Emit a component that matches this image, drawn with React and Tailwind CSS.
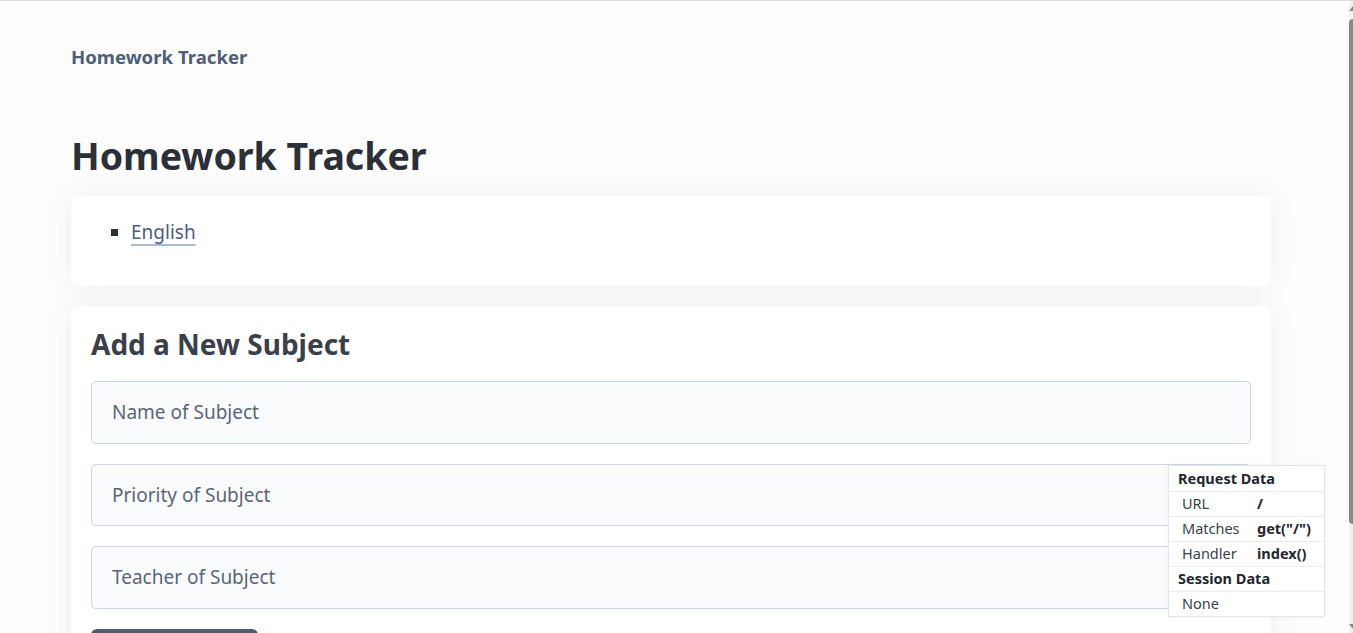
import React from 'react';

const fields = ['Name of Subject', 'Priority of Subject', 'Teacher of Subject'];

const DebugRow = ({ label, value }) => (
  <div className="flex h-[25px] items-center border-t border-[#ececef] pl-[13px]">
    <span className="w-[75px] font-normal text-[#3a3f4a]">{label}</span>
    <span className="font-bold text-[#23262d]">{value}</span>
  </div>
);

const DebugHeader = ({ children }) => (
  <div className="flex h-[25px] items-center border-t border-[#ececef] pl-[9px] font-bold text-[#23262d] first:border-t-0">
    {children}
  </div>
);

const App = () => {
  return (
    <div className="flex h-screen overflow-hidden border-t border-[#dedede] bg-[#fdfdfd] font-['Noto_Sans','Open_Sans',sans-serif]">
      <div className="relative flex-1 overflow-hidden">
        <div className="ml-[71px] w-[1200px]">
          <nav className="pt-[44px] text-[18.6px] font-bold leading-[24px] text-[#4d5d7c]">Homework Tracker</nav>

          <h1 className="mt-[62px] text-[37.5px] font-bold leading-[50px] text-[#2b2f37]">Homework Tracker</h1>

          <div className="mt-[15px] h-[90px] rounded-[7px] bg-white px-5 pt-[20px] shadow-[0_0_28px_rgba(40,50,90,0.07)]">
            <ul className="list-[square] pl-10 text-[19px] leading-[32px] text-[#4d5d7c] marker:text-[#2b2f37]">
              <li>
                <a href="#" className="underline decoration-[#a9bcd6] decoration-2 underline-offset-[5px]">English</a>
              </li>
            </ul>
          </div>

          <div className="mt-5 h-[400px] rounded-[7px] bg-white px-5 pt-[20px] shadow-[0_0_28px_rgba(40,50,90,0.07)]">
            <h2 className="text-[28px] font-bold leading-[36px] text-[#3a3f4a]">Add a New Subject</h2>
            <form className="mt-[19px] flex flex-col gap-[20px]">
              {fields.map((f) => (
                <input
                  key={f}
                  placeholder={f}
                  className="h-[62.5px] w-full rounded-[5px] border border-[#cfd5e2] bg-[#fafbfc] px-5 text-[19px] text-[#5b6579] placeholder:text-[#5b6579] outline-none"
                />
              ))}
              <button
                type="button"
                className="h-[46px] w-[167px] rounded-[6px] bg-[#4d5c78] pt-[20px] text-[18px] font-bold text-white"
              >
                Add Subject
              </button>
            </form>
          </div>
        </div>

        <div className="absolute left-[1168px] top-[464px] w-[157px] border border-[#e3e5ea] bg-white text-[14.5px] shadow-[0_0_6px_rgba(0,0,0,0.04)]">
          <DebugHeader>Request Data</DebugHeader>
          <DebugRow label="URL" value="/" />
          <DebugRow label="Matches" value={'get("/")'} />
          <DebugRow label="Handler" value="index()" />
          <DebugHeader>Session Data</DebugHeader>
          <div className="flex h-[25px] items-center border-t border-[#ececef] pl-[13px] text-[#3a3f4a]">None</div>
        </div>
      </div>

      <div className="flex w-[4px] flex-col items-start bg-[#f1f1f1]">
        <div className="mt-[5px] h-0 w-0 border-x-[4px] border-b-[5px] border-x-transparent border-b-[#8a8a8a]" />
        <div className="mt-[8px] h-[505px] w-[8px] rounded-[4px] bg-[#8a8a8a]" />
        <div className="mt-auto mb-[4px] h-0 w-0 border-x-[4px] border-t-[5px] border-x-transparent border-t-[#8a8a8a]" />
      </div>
    </div>
  );
};

export default App;
